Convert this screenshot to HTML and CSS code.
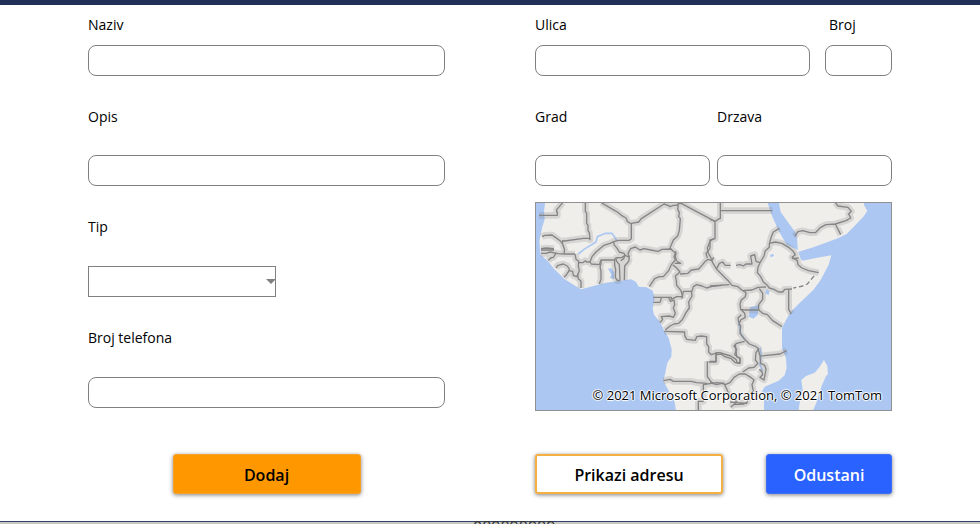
FILE: index.html
```html
<!DOCTYPE html>
<html lang="hr">
<head>
<meta charset="utf-8">
<meta name="viewport" content="width=device-width, initial-scale=1">
<title>Dodavanje</title>
<link rel="stylesheet" href="styles.css">
</head>
<body>
<form class="dialog">
  <div class="columns">
    <div class="column">
      <div class="field field-near"><label for="naziv">Naziv</label><input id="naziv" type="text"></div>
      <div class="field"><label for="opis">Opis</label><input id="opis" type="text"></div>
      <div class="field field-far"><label for="tip">Tip</label>
        <div class="select-wrap"><select id="tip"><option></option></select></div>
      </div>
      <div class="field field-far"><label for="telefon">Broj telefona</label><input id="telefon" type="text"></div>
    </div>
    <div class="column">
      <div class="street">
        <div class="field field-near"><label for="ulica">Ulica</label><input id="ulica" type="text"></div>
        <div class="field field-near"><label class="label-inset" for="broj">Broj</label><input id="broj" type="text"></div>
      </div>
      <div class="city">
        <div class="field"><label for="grad">Grad</label><input id="grad" type="text"></div>
        <div class="field"><label for="drzava">Drzava</label><input id="drzava" type="text"></div>
      </div>
      <div class="map">
        <svg viewBox="18 15 1065 621" preserveAspectRatio="xMidYMid slice" aria-hidden="true">
          <defs>
            <g id="borders">
              <path d="M27 52H82V42H80V35L88 26 98 14M166 14V40L170 46V76L174 82V98L178 104 180 125 178 121H160L104 129 96 128"/>
              <path d="M36 116L44 112 66 111 76 118 84 124 92 130 98 138 104 156 102 166M96 138L99 128M33 152L48 150 72 152M33 156H72M33 166H48L60 162 84 167 104 168 135 168M55 188L62 180 70 178 78 166M78 210L84 202 100 198 112 204 118 213 116 220 108 232 102 238M118 218L128 220 130 232 140 236 146 227M135 168L138 184 146 190 145 205 148 218 143 230 145 242 153 250 153 270"/>
              <path d="M146 194H158L166 188 170 192 180 192 186 176 198 162 222 142 240 136 253 130 266 127H298L304 122V78L292 70 288 60 274 52 262 42 248 34 214 14M304 76L326 72 334 62 402 18 414 22 420 26 430 22H440L446 16 455 17 555 70M180 192L184 198 208 200 213 186H252L258 180 276 178 285 172M252 131L252 140 262 152 268 162 282 166 286 172 298 178"/>
              <path d="M213 186V198L210 206 213 220 213 244 208 258M254 186V202L257 214 256 238 262 248 272 246M258 182L260 190 268 200 270 244M285 172L281 182 272 188M298 178L296 190 284 204 283 247M298 178L294 166 302 152 316 147 330 156 342 152 362 156 384 160 396 154 424 153M445 20L443 34 448 44 446 56 451 62 448 98 443 114 430 126 420 150 428 158 438 166 436 176 440 188"/>
              <path d="M438 160L432 176 436 186 424 200 416 218 400 236 388 236 374 242 358 266M428 200L440 210 450 222 436 234 439 248 440 262 453 278 458 296M434 196L452 196 440 190M450 228L474 226 484 216 506 213 518 200 524 192 534 184 545 188 551 178"/>
              <path d="M551 122L540 130 536 140 532 150 534 160 528 166 532 180"/>
              <path d="M370 298H424V304L440 296H456V302M370 313H390L394 300M416 300L422 310 432 306 434 320 430 330 436 346 430 358 418 354 394 356 398 364 390 374M456 300L460 280H486L490 266 500 260 516 264 530 270 546 265 575 262M484 280L486 294 476 312 478 330 468 344 462 356 456 366 446 376 432 378 420 384 406 396"/>
              <path d="M403 400L464 402V412L470 424 496 427 500 416 514 414 530 416V438L536 446V462L544 470 556 466 562 466M536 492H558V464L570 464 582 468 602 474 618 484 622 496 630 496 630 480 620 476 616 440M400 548L420 544 430 550 484 550 500 554 532 556M532 490V536L542 550 552 558M505 636V610L520 610V560L560 554 584 556"/>
            </g>
            <g id="east-borders">
              <path d="M0 64L15 70 28 62 31 62V14M31 38H187M15 70V122L0 126V150L-7 162 2 178 8 194 20 214 40 234 56 250 66 262 84 266 98 278"/>
              <path d="M20 212L28 196 38 192 46 202 62 202M78 202L90 200 100 204 108 198 126 198 122 174 134 170 138 190 150 194M208 91L190 102 184 116 178 138 178 148 166 158 162 174 150 194 144 208 142 224 152 236 160 252 170 260 178 270 192 274 206 282 218 282 224 274 246 273"/>
              <path d="M178 136L196 132 216 136 236 148 248 158 256 170 246 178 262 188 264 200 276 210 296 218 326 224M246 182L266 180M254 115L264 101 278 98 300 104 316 104 322 98 332 88 348 80 376 78 408 68 422 60 416 48 424 40 414 28 384 24 376 14M376 78L392 110"/>
              <path d="M0 264L58 260M98 278L126 276 144 268 168 267M98 278L108 284 106 296 94 306 90 318 92 334 104 336M148 272L158 286 158 304 146 320 146 336M236 276V334L244 348"/>
              <path d="M104 336H146L158 346 172 350 188 368 216 386M92 334L104 346 106 358 92 366 86 382M94 350L84 360 86 372 92 384 90 406 104 424 118 438 138 446 146 452 138 464 136 486 144 496 132 508 116 510 98 522"/>
              <path d="M104 430L80 436 72 444 80 454 74 470 90 482 90 494 76 494 64 482 44 476 34 468 18 470V490H0M144 452L150 474 210 468 230 458M150 476L152 496 164 502 168 514 162 546 150 538 158 530 156 522 148 514"/>
              <path d="M0 554L20 560 36 556 46 560 60 554 72 538 88 528 106 528 122 538 132 546 126 560 130 580 114 594 112 612 102 618 70 620M60 612L82 614 112 616M62 628L80 612 68 598 56 586 44 560"/>
            </g>
          </defs>
          <rect class="sea" x="0" y="0" width="1100" height="650"/>
          <path class="land" d="M47 0L42 40 44 64 36 90 28 130 32 170 56 192 70 210 102 242 140 266 154 274 204 260 228 254 282 247 304 244 318 252 326 266 350 268 368 278 374 300 368 332 372 350 390 372 402 396 416 420 425 454 424 476 412 494 406 524 400 548 418 582 434 612 438 640H702V606L694 584 704 566 746 548 764 532 770 510 768 480 756 450V414L756 390 770 362 784 340 812 312 850 276 872 246 896 200 904 172 870 178 816 188 810 178 804 156 770 140 748 102 726 54 708 0Z"/>
          <path class="land" d="M744 0L752 42 776 76 800 108 804 162 850 148 920 122 950 108 970 88 1002 54 1012 38 1002 22V0Z"/>
          <path class="land" d="M882 486L892 504 894 528 888 534 874 566 860 612 848 640H806L808 620 818 576 814 546 828 534 854 524 868 508Z"/>
          <path class="river" d="M145 168L162 154 198 132 202 116 226 106 246 106 262 130"/>
          <path class="lake" d="M234 212L244 210 252 222V244L240 240 244 230ZM660 328L684 322V350L670 362 656 356ZM720 170L730 168 732 174 722 178ZM708 274L718 280 716 292 706 286Z"/>
          <path class="river" d="M626 374L632 406 644 424M690 450L694 474 690 500 698 520"/>
          <g class="halo"><use href="#borders"/><use href="#east-borders" x="540"/></g>
          <g class="line"><use href="#borders"/><use href="#east-borders" x="540"/></g>
          <path class="line dashed" d="M852 234L832 258 818 264 790 270"/>
        </svg>
        <small class="credit">© 2021 Microsoft Corporation, © 2021 TomTom</small>
      </div>
    </div>
  </div>
  <div class="columns actions">
    <div class="action-center"><button class="btn btn-add" type="button">Dodaj</button></div>
    <div class="action-split"><button class="btn btn-show" type="button">Prikazi adresu</button><button class="btn btn-cancel" type="button">Odustani</button></div>
  </div>
</form>
<div class="behind">089898989</div>
</body>
</html>
```
FILE: styles.css
```css
* { box-sizing: border-box; }
body {
  margin: 0;
  height: 100vh;
  overflow: hidden;
  background: #c8c8c3;
  color: #000;
  font: 14px/20px "Open Sans", "Noto Sans", sans-serif;
}
.dialog {
  background: #fff;
  border-top: 5px solid #1f2f57;
  border-bottom: 1px solid #2f4468;
  padding: 10px 88px 27px;
}
.columns {
  display: grid;
  grid-template-columns: 1fr 1fr;
  column-gap: 90px;
}
.column {
  display: flex;
  flex-direction: column;
  gap: 31px;
}
.field {
  display: flex;
  flex-direction: column;
  gap: 28px;
  min-width: 0;
}
.field-near { gap: 10px; }
.field-far { gap: 29px; }
.label-inset { padding-left: 4px; }
input, select {
  width: 100%;
  height: 31px;
  margin: 0;
  padding: 0 8px;
  border: 1px solid #808080;
  border-radius: 8px;
  background: #fff;
  font: inherit;
}
.select-wrap { position: relative; width: 188px; }
.select-wrap::after {
  content: "";
  position: absolute;
  right: 0;
  top: 13px;
  border: 5px solid transparent;
  border-top-color: #808080;
  border-bottom: 0;
}
select {
  display: block;
  appearance: none;
  border-radius: 0;
}
.street {
  display: grid;
  grid-template-columns: 1fr 67px;
  gap: 15px;
}
.city {
  display: grid;
  grid-template-columns: 1fr 1fr;
  gap: 7px;
}
.map {
  position: relative;
  margin-top: -15px;
  border: 1px solid #909090;
}
.map svg { display: block; width: 100%; }
.sea, .lake { fill: #abc7f2; }
.land { fill: #efeeeb; }
.river { fill: none; stroke: #abc7f2; stroke-width: 5; }
.halo, .line { fill: none; stroke-linejoin: round; }
.halo { stroke: #808080; stroke-width: 20; opacity: 0.22; }
.line { stroke: #858585; stroke-width: 4; }
.dashed { stroke-dasharray: 14 8; }
.credit {
  position: absolute;
  right: 9px;
  bottom: 5px;
  font-size: 13px;
  white-space: nowrap;
  text-shadow: 1px 0 1px #fff, -1px 0 1px #fff, 0 1px 1px #fff, 0 -1px 1px #fff, 0 0 2px #fff;
}
.actions { margin-top: 43px; }
.action-center { display: flex; justify-content: center; }
.action-split { display: flex; justify-content: space-between; }
.btn {
  width: 188px;
  height: 40px;
  padding: 2px 0 0;
  border: 1px solid;
  border-radius: 3px;
  box-shadow: 0 1px 4px rgba(0, 0, 0, 0.5);
  font: 600 16px/24px "Open Sans", "Noto Sans", sans-serif;
}
.btn-add { background: #ff9800; border-color: #f5a12a; color: #000; }
.btn-show { background: #fff; border: 2px solid #f5b043; color: #000; }
.btn-cancel { width: 126px; background: #2962ff; border-color: #3d6ef5; color: #fff; }
.behind {
  padding-left: 473px;
  font-size: 16px;
  line-height: 10px;
  color: #333;
}
```
